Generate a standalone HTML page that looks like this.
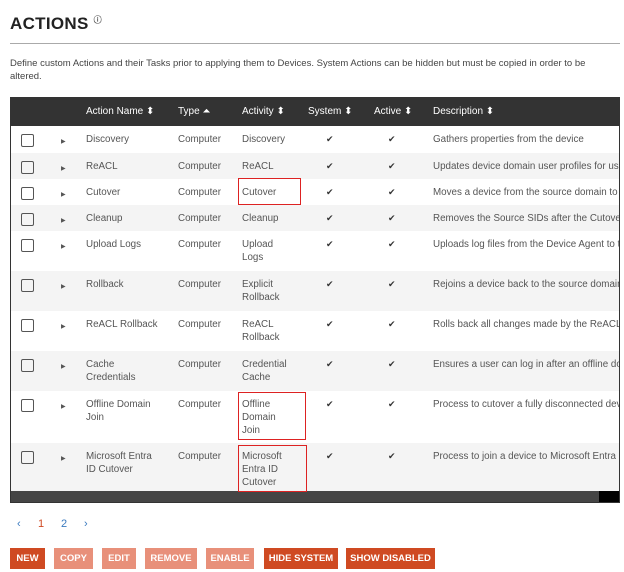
<!DOCTYPE html><html><head><style>
body{margin:0;width:624px;height:572px;background:#fff;font-family:"Liberation Sans",sans-serif;color:#444;position:relative;overflow:hidden}
.a{position:absolute;white-space:nowrap}
h1{position:absolute;left:10px;top:14px;margin:0;font-size:17px;font-weight:bold;color:#222;letter-spacing:.3px}
.hr{position:absolute;left:10px;top:43px;width:610px;height:1px;background:#aaa}
.tbl{position:absolute;left:10px;top:97px;width:610px;height:406px;border:1px solid #333;box-sizing:border-box;overflow:hidden;background:#fff}
.hd{position:absolute;left:0;top:0;width:610px;height:28px;background:#333;color:#fff;font-size:10px}
.hd span{position:absolute;top:8px;white-space:nowrap}
.row{position:absolute;left:0;width:610px;font-size:9.8px;color:#555;line-height:13px;white-space:nowrap}
.row span{position:absolute;top:7px}
.cb{position:absolute;left:10px;width:11px;height:11px;border:1.3px solid #555;border-radius:2px;top:8px}
.ar{font-size:6px;left:50px;top:10px!important}
.ck{font-size:9px;color:#333}
.sb{position:absolute;left:0;bottom:0;width:610px;height:11px;background:#454545}
.sb i{position:absolute;right:0;top:0;width:22px;height:11px;background:#000}
.red{position:absolute;border:1.5px solid #d22;box-sizing:border-box}
.btn{position:absolute;top:548px;height:21px;line-height:21px;color:#fff;font-size:9.5px;font-weight:bold;text-align:center}
.d{background:#cf4a22}.l{background:#e8907a}
</style></head><body>
<h1>ACTIONS <sup style="font-size:8px;color:#555">&#9432;</sup></h1>
<div class="hr"></div>
<div class="a" style="left:10px;top:57px;font-size:9.5px;color:#444;line-height:13px;white-space:normal;width:600px">Define custom Actions and their Tasks prior to applying them to Devices. System Actions can be hidden but must be copied in order to be altered.</div>
<div class="tbl">
<div class="hd"><span style="left:75px">Action Name ⬍</span><span style="left:167px">Type ⏶</span><span style="left:231px">Activity ⬍</span><span style="left:297px">System ⬍</span><span style="left:363px">Active ⬍</span><span style="left:422px">Description ⬍</span></div>
<div class="row" style="top:28px;height:27px"><i class="cb"></i><span class="ar">▶</span><span style="left:75px">Discovery</span><span style="left:167px">Computer</span><span style="left:231px">Discovery</span><span class="ck" style="left:315px">✔</span><span class="ck" style="left:377px">✔</span><span style="left:422px">Gathers properties from the device</span></div>
<div class="row" style="top:55px;height:26px;background:#f4f4f4"><i class="cb"></i><span class="ar">▶</span><span style="left:75px">ReACL</span><span style="left:167px">Computer</span><span style="left:231px">ReACL</span><span class="ck" style="left:315px">✔</span><span class="ck" style="left:377px">✔</span><span style="left:422px">Updates device domain user profiles for use</span></div>
<div class="row" style="top:81px;height:26px"><i class="cb"></i><span class="ar">▶</span><span style="left:75px">Cutover</span><span style="left:167px">Computer</span><span style="left:231px">Cutover</span><span class="ck" style="left:315px">✔</span><span class="ck" style="left:377px">✔</span><span style="left:422px">Moves a device from the source domain to t</span></div>
<div class="row" style="top:107px;height:26px;background:#f4f4f4"><i class="cb"></i><span class="ar">▶</span><span style="left:75px">Cleanup</span><span style="left:167px">Computer</span><span style="left:231px">Cleanup</span><span class="ck" style="left:315px">✔</span><span class="ck" style="left:377px">✔</span><span style="left:422px">Removes the Source SIDs after the Cutover</span></div>
<div class="row" style="top:133px;height:40px"><i class="cb"></i><span class="ar">▶</span><span style="left:75px">Upload Logs</span><span style="left:167px">Computer</span><span style="left:231px">Upload<br>Logs</span><span class="ck" style="left:315px">✔</span><span class="ck" style="left:377px">✔</span><span style="left:422px">Uploads log files from the Device Agent to t</span></div>
<div class="row" style="top:173px;height:40px;background:#f4f4f4"><i class="cb"></i><span class="ar">▶</span><span style="left:75px">Rollback</span><span style="left:167px">Computer</span><span style="left:231px">Explicit<br>Rollback</span><span class="ck" style="left:315px">✔</span><span class="ck" style="left:377px">✔</span><span style="left:422px">Rejoins a device back to the source domain</span></div>
<div class="row" style="top:213px;height:40px"><i class="cb"></i><span class="ar">▶</span><span style="left:75px">ReACL Rollback</span><span style="left:167px">Computer</span><span style="left:231px">ReACL<br>Rollback</span><span class="ck" style="left:315px">✔</span><span class="ck" style="left:377px">✔</span><span style="left:422px">Rolls back all changes made by the ReACL p</span></div>
<div class="row" style="top:253px;height:40px;background:#f4f4f4"><i class="cb"></i><span class="ar">▶</span><span style="left:75px">Cache<br>Credentials</span><span style="left:167px">Computer</span><span style="left:231px">Credential<br>Cache</span><span class="ck" style="left:315px">✔</span><span class="ck" style="left:377px">✔</span><span style="left:422px">Ensures a user can log in after an offline do</span></div>
<div class="row" style="top:293px;height:52px"><i class="cb"></i><span class="ar">▶</span><span style="left:75px">Offline Domain<br>Join</span><span style="left:167px">Computer</span><span style="left:231px">Offline<br>Domain<br>Join</span><span class="ck" style="left:315px">✔</span><span class="ck" style="left:377px">✔</span><span style="left:422px">Process to cutover a fully disconnected devi</span></div>
<div class="row" style="top:345px;height:50px;background:#f4f4f4"><i class="cb"></i><span class="ar">▶</span><span style="left:75px">Microsoft Entra<br>ID Cutover</span><span style="left:167px">Computer</span><span style="left:231px">Microsoft<br>Entra ID<br>Cutover</span><span class="ck" style="left:315px">✔</span><span class="ck" style="left:377px">✔</span><span style="left:422px">Process to join a device to Microsoft Entra ID</span></div>
<div class="sb"><i></i></div>
</div>
<div class="red" style="left:238px;top:178px;width:63px;height:27px"></div>
<div class="red" style="left:238px;top:392px;width:68px;height:48px"></div>
<div class="red" style="left:238px;top:445px;width:69px;height:47px"></div>
<div class="a" style="left:17px;top:518px;font-size:11px;color:#3a7abf">‹</div>
<div class="a" style="left:38px;top:518px;font-size:11px;color:#cf4a22">1</div>
<div class="a" style="left:61px;top:518px;font-size:11px;color:#3a7abf">2</div>
<div class="a" style="left:84px;top:518px;font-size:11px;color:#3a7abf">›</div>
<div class="btn d" style="left:10px;width:35px">NEW</div>
<div class="btn l" style="left:54px;width:39px">COPY</div>
<div class="btn l" style="left:102px;width:34px">EDIT</div>
<div class="btn l" style="left:145px;width:52px">REMOVE</div>
<div class="btn l" style="left:206px;width:48px">ENABLE</div>
<div class="btn d" style="left:264px;width:74px">HIDE SYSTEM</div>
<div class="btn d" style="left:346px;width:89px">SHOW DISABLED</div>
</body></html>
